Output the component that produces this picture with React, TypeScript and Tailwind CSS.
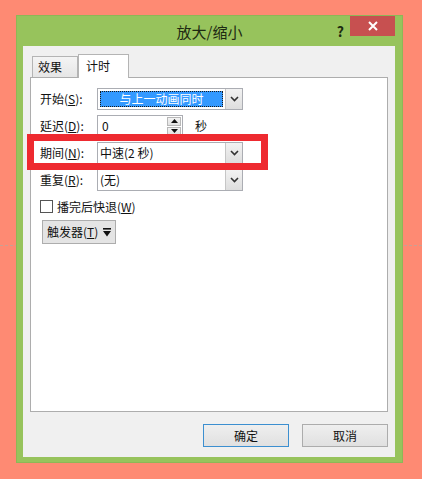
import React from "react";

const font = { fontFamily: '"Microsoft YaHei", "Noto Sans CJK SC", "Noto Sans", sans-serif' };

function Chevron() {
  return (
    <svg width="9" height="6" viewBox="0 0 9 6">
      <polyline points="1,1 4.5,4.5 8,1" fill="none" stroke="#333" strokeWidth="1.6" />
    </svg>
  );
}

function DropBtn() {
  return (
    <div className="w-[17px] h-full flex items-center justify-center border-l border-[#c6c6c6] bg-gradient-to-b from-[#f2f2f2] to-[#dedede]">
      <Chevron />
    </div>
  );
}

function Label({ text, k }: { text: string; k: string }) {
  return (
    <div className="w-[57px] text-[12px] text-[#111] leading-none">
      {text}(<span className="underline">{k}</span>):
    </div>
  );
}

export default function App() {
  return (
    <div className="relative w-[422px] h-[479px] bg-[#fe8a73] overflow-hidden pt-[15px] pl-[16px]" style={font}>
      <div className="absolute left-0 right-0 top-[245px] border-t border-dashed border-[#c9a093]" />
      <div className="relative w-[387px] h-[448px] bg-[#97c35c] flex flex-col border border-[#8db757]">
        <div className="relative h-[30px] flex items-center justify-center">
          <span className="text-[15px] text-[#1e2a12] mt-[2px]">放大/缩小</span>
          <span className="absolute right-[58px] top-[5px] text-[14px] font-bold text-[#1c2a10]">?</span>
          <div className="absolute right-[7px] top-0 w-[45px] h-[20px] bg-[#c75050] flex items-center justify-center">
            <svg width="10" height="10" viewBox="0 0 10 10">
              <path d="M1 1 L9 9 M9 1 L1 9" stroke="#fff" strokeWidth="2" />
            </svg>
          </div>
        </div>
        <div className="ml-[6px] mr-[7px] h-[411px] bg-[#f0f0f0] flex flex-col pt-[8px]">
          <div className="flex items-end h-[23px] pl-[9px]">
            <div className="w-[46px] h-[21px] border border-b-0 border-[#b4b4b4] bg-gradient-to-b from-[#f4f4f4] to-[#e6e6e6] text-[12px] text-[#111] flex items-center pl-[5px]">
              效果
            </div>
            <div className="relative z-10 -mb-px w-[51px] h-[24px] border border-b-0 border-[#b4b4b4] bg-white text-[12px] text-[#111] flex items-center pl-[7px] pb-[2px]">
              计时
            </div>
          </div>
          <div className="relative mx-[7px] h-[335px] border border-[#adadad] bg-white pl-[9px] pt-[10px] flex flex-col">
            <div className="flex flex-col gap-[5px]">
              <div className="flex items-center h-[22px]">
                <Label text="开始" k="S" />
                <div className="w-[146px] h-[22px] border border-[#abadb3] bg-white flex">
                  <div className="flex-1 p-[2px]">
                    <div className="h-full bg-[#3399ff] border border-dotted border-[#1a1a1a] text-white text-[12px] flex items-center justify-center leading-none">
                      与上一动画同时
                    </div>
                  </div>
                  <DropBtn />
                </div>
              </div>
              <div className="flex items-center h-[22px]">
                <Label text="延迟" k="D" />
                <div className="w-[86px] h-[22px] border border-[#abadb3] bg-white flex">
                  <div className="flex-1 text-[12px] text-[#111] pl-[4px] flex items-center leading-none">0</div>
                  <div className="w-[16px] h-full flex flex-col gap-px p-px">
                    <div className="flex-1 border border-[#b8b8b8] bg-gradient-to-b from-[#f4f4f4] to-[#e2e2e2] flex items-center justify-center">
                      <svg width="7" height="4" viewBox="0 0 7 4"><polygon points="0,4 7,4 3.5,0" fill="#111" /></svg>
                    </div>
                    <div className="flex-1 border border-[#b8b8b8] bg-gradient-to-b from-[#f4f4f4] to-[#e2e2e2] flex items-center justify-center">
                      <svg width="7" height="4" viewBox="0 0 7 4"><polygon points="0,0 7,0 3.5,4" fill="#111" /></svg>
                    </div>
                  </div>
                </div>
                <span className="ml-[12px] text-[12px] text-[#111] leading-none">秒</span>
              </div>
              <div className="flex items-center h-[22px]">
                <Label text="期间" k="N" />
                <div className="w-[146px] h-[22px] border border-[#abadb3] bg-white flex">
                  <div className="flex-1 text-[12px] text-[#111] pl-[2px] flex items-center leading-none">中速(2 秒)</div>
                  <DropBtn />
                </div>
              </div>
              <div className="flex items-center h-[22px]">
                <Label text="重复" k="R" />
                <div className="w-[146px] h-[22px] border border-[#abadb3] bg-white flex">
                  <div className="flex-1 text-[12px] text-[#111] pl-[2px] flex items-center leading-none">(无)</div>
                  <DropBtn />
                </div>
              </div>
            </div>
            <div className="flex items-center mt-[9px] h-[13px]">
              <div className="w-[13px] h-[13px] border border-[#555] bg-white" />
              <span className="ml-[4px] text-[12px] text-[#111] leading-none">
                播完后快退(<span className="underline">W</span>)
              </span>
            </div>
            <div className="mt-[7px] ml-[2px] w-[74px] h-[24px] border border-[#adadad] bg-[#e4e4e4] flex items-center pl-[4px] gap-[5px]">
              <span className="text-[12px] text-[#111] leading-none">
                触发器(<span className="underline">T</span>)
              </span>
              <svg width="8" height="9" viewBox="0 0 8 9">
                <rect x="0" y="0" width="8" height="1.6" fill="#111" />
                <polygon points="0,3 8,3 4,8.5" fill="#111" />
              </svg>
            </div>
            <div className="absolute left-[-4px] top-[56px] w-[241px] h-[36px] border-[7px] border-[#ee2a30]" />
          </div>
          <div className="flex justify-end gap-[13px] pr-[7px] mt-[12px]">
            <div className="w-[86px] h-[23px] border border-[#3c8fd0] bg-gradient-to-b from-[#efefef] to-[#e0e0e0] flex items-center justify-center text-[12px] text-[#111]">
              确定
            </div>
            <div className="w-[86px] h-[23px] border border-[#acacac] bg-gradient-to-b from-[#efefef] to-[#e0e0e0] flex items-center justify-center text-[12px] text-[#111]">
              取消
            </div>
          </div>
        </div>
      </div>
    </div>
  );
}
